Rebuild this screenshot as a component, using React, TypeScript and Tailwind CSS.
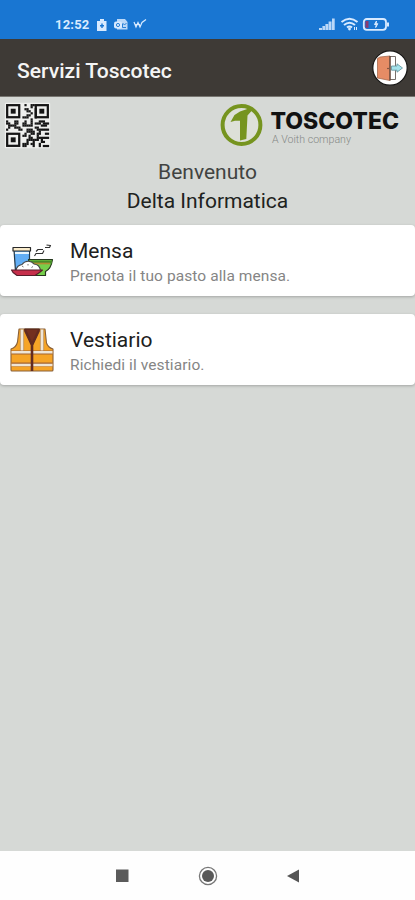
import type { ReactNode } from "react";

// data modules only, the three corner finders are drawn on top
const qrRows = [
  "000000000100110000000",
  "000000000000100000000",
  "000000000110001000000",
  "000000000011001000000",
  "000000000000101000000",
  "000000000011001000000",
  "000000001110001000000",
  "000000000000100000000",
  "100011000100100011100",
  "110011001100101110111",
  "011110001111100001110",
  "010011100000001100000",
  "100000110011100111111",
  "000000000011110010000",
  "000000000100110110011",
  "000000001101000100000",
  "000000000001100111111",
  "000000000011111101000",
  "000000000010010001100",
  "000000001110110010000",
  "000000001100010010111",
];

const finders = [
  [0, 0],
  [14, 0],
  [0, 14],
];

function QrCode() {
  return (
    <svg viewBox="-1 -1 23 23" className="size-[47px]">
      <rect x="-0.6" y="-0.6" width="22.2" height="22.2" rx="0.5" fill="#eeefed" />
      {qrRows.flatMap((row, y) =>
        [...row].map((cell, x) =>
          cell === "1" ? <rect key={`${x}-${y}`} x={x} y={y} width="1.08" height="1.08" fill="#151515" /> : null
        )
      )}
      {finders.map(([x, y]) => (
        <g key={`${x}-${y}`}>
          <rect x={x + 0.55} y={y + 0.55} width="5.9" height="5.9" fill="none" stroke="#151515" strokeWidth="1.1" />
          <rect x={x + 2.3} y={y + 2.3} width="2.4" height="2.4" fill="#151515" />
        </g>
      ))}
    </svg>
  );
}

function Logo() {
  return (
    <svg width="185" height="50" viewBox="0 0 185 50">
      <circle cx="23.5" cy="25" r="18.9" fill="#dde0d8" stroke="#76941f" strokeWidth="4" />
      <path d="M12.5 22 L16.5 15 L22 11.5 L33.5 7.5 L33.5 11 L29.5 15.5 L28.3 39 L22 40.5 V20.8 L17 20.8 Z" fill="#76941f" />
      <text x="52.5" y="29" textLength="128.5" fontSize="23" className="font-[Inter,sans-serif] font-extrabold" fill="#111">
        TOSCOTEC
      </text>
      <text x="54" y="43" textLength="79" lengthAdjust="spacingAndGlyphs" fontSize="10.5" className="font-[Roboto,sans-serif] font-light" fill="#858885">
        A Voith company
      </text>
    </svg>
  );
}

function ExitIcon() {
  return (
    <svg width="36" height="36" viewBox="0 0 36 36">
      <circle cx="18" cy="18" r="17.2" fill="#fff" stroke="#171615" strokeWidth="1.2" />
      <path d="M18 6.5 H23.5 V29.5 H18" fill="#fff" stroke="#77706c" strokeWidth="1" />
      <path d="M5.5 8.5 L8 7 L18 6 V30.5 L5.5 28 Z" fill="#e68c65" stroke="#a3694f" strokeWidth="0.8" />
      <path d="M18 6 V30.5" stroke="#5d453c" strokeWidth="1.3" />
      <circle cx="16" cy="18.5" r="0.8" fill="#614034" />
      <path d="M19.5 16 H25 V13.8 L30.5 18 L25 22.2 V20.2 H19.5 Z" fill="#a5e3ec" stroke="#5f909a" strokeWidth="0.8" />
    </svg>
  );
}

function MealIcon() {
  return (
    <svg width="44" height="44" viewBox="0 0 44 44" strokeLinejoin="round">
      <path d="M4 11 H19.5 V32 H5.5 Z" fill="#62aef5" stroke="#253848" strokeWidth="1.2" />
      <path d="M5 14 H19" stroke="#e9f7ff" strokeWidth="2" />
      <path d="M3 8.5 H20.5 V12 H3 Z" fill="#faeccb" stroke="#292929" strokeWidth="1.2" />
      <path d="M18.5 20.5 H42.5 C41.5 27 39 31 35.5 32.5 V36.5 H23 Z" fill="#76cf4b" stroke="#26371e" strokeWidth="1.2" />
      <path d="M20 21.5 H42 V24.5 H20 Z" fill="#478c29" />
      <path d="M23 24.5 H40" stroke="#b58d34" strokeWidth="1.7" />
      <path d="M6 31.5 C6.5 28 9 26 12 25.5 C15 21.5 21 21 24 25 C28 25.5 30 28 30.5 31.5 Z" fill="#fff" stroke="#444" strokeWidth="1.1" />
      <path d="M12 27 L13.5 28 M18 25 V26.5 M23 27.5 L21.5 28.5" stroke="#777" />
      <path d="M1.5 31 H32.5 L29.5 33.5 L25 36.5 H7 L3 33.5 Z" fill="#c62f4b" stroke="#571d2a" strokeWidth="1.1" />
      <path d="M24.5 17 L26 14.5 H32.5 L34 11.5 M26 12.5 L28 10.5 H33 M35 8.5 H39.5 L40.5 6.5 L36.5 6" fill="none" stroke="#303030" strokeWidth="1.1" />
    </svg>
  );
}

function VestIcon() {
  return (
    <svg width="44" height="46" viewBox="0 0 44 46" strokeLinejoin="round">
      <path d="M9 2 H35 L36.5 16 C37.5 19 39.5 21 43 22 V43 Q43 44 42 44 H2 Q1 44 1 43 V22 C4.5 21 6.5 19 7.5 15 Z" fill="#f6a426" stroke="#8a6038" strokeWidth="1.1" />
      <path d="M14.5 2 H29.5 L22 19 Z" fill="#74301f" stroke="#4c241b" />
      <path d="M12 2.5 V24 M32 2.5 V24" stroke="#b98b52" strokeWidth="4.2" />
      <path d="M12 2.5 V24 M32 2.5 V24" stroke="#f0e6d8" strokeWidth="2.6" />
      <path d="M1.5 25.5 H42.5 M1.5 37.5 H42.5" stroke="#a3622f" strokeWidth="3.8" />
      <path d="M1.5 25.3 H42.5 M1.5 38 H42.5" stroke="#eee5d6" strokeWidth="2.6" />
      <path d="M15 3 L22 18 L29 3 M22 17 V44" fill="none" stroke="#622b20" strokeWidth="2.6" />
    </svg>
  );
}

function StatusBar() {
  return (
    <div className="flex h-[39px] shrink-0 items-center justify-between bg-[#1976d2] pr-[25px] pl-[55px] pt-[10px] text-[#d8eaff]">
      <div className="flex items-center gap-2">
        <span className="w-[34px] text-[13px] font-bold leading-4 tracking-[0.2px]">12:52</span>
        <svg width="50" height="14" viewBox="0 0 50 14">
          <path d="M0 3 H3 V1 H7 V3 H9.5 V13 H0 Z" fill="currentColor" />
          <path d="M5 5.5 V10 M3 7.7 H7" stroke="#1976d2" strokeWidth="1.4" />
          <path d="M20 1 H28 L30.5 4 V11.5 H20 Z" fill="currentColor" opacity="0.85" />
          <rect x="17" y="3.5" width="8" height="7" rx="2" fill="currentColor" />
          <circle cx="21" cy="7" r="1.6" fill="none" stroke="#1976d2" strokeWidth="0.9" />
          <path d="M25.5 6 V9.5 H29 M25.5 5 L27.5 7 L29.5 5" fill="none" stroke="#1976d2" strokeWidth="0.9" />
          <path d="M37 4 L39 9 L41 4.5 L43 9 L45 4.5 L49 1.5 M37.5 6.5 H43" fill="none" stroke="currentColor" strokeWidth="1.2" />
        </svg>
      </div>
      <svg width="71" height="15" viewBox="0 0 71 15">
        <path d="M0 13 V11 H3 V13 Z M3.4 13 V9 H6 V13 Z M6.4 13 V7 H9.2 V13 Z M9.6 13 V4.5 H12.5 V13 Z M13 13 V1.5 H15.7 V13 Z" fill="currentColor" opacity="0.85" />
        <path d="M22.5 5 Q30.5 -1.5 38.5 5 M25 8 Q30.5 3.5 36 8 M28 10.5 Q30.5 8.5 33 10.5" fill="none" stroke="currentColor" strokeWidth="2" />
        <circle cx="30.5" cy="12" r="1.4" fill="currentColor" />
        <path d="M35.5 10 V13 M37.5 13 V10" stroke="currentColor" />
        <rect x="44.8" y="2" width="22.2" height="10.8" rx="3" fill="none" stroke="currentColor" strokeWidth="1.8" />
        <rect x="46.5" y="4" width="3" height="6.8" fill="#8c3a70" />
        <path d="M57.5 4 L55.5 7.5 H57.3 L56.7 10.5 L58.8 6.7 H57 Z" fill="currentColor" stroke="currentColor" />
        <path d="M69 5.5 V9.5" stroke="currentColor" strokeWidth="2" />
      </svg>
    </div>
  );
}

function ServiceCard({ icon, title, text }: { icon: ReactNode; title: string; text: string }) {
  return (
    <div className="flex h-[71px] items-center rounded-sm bg-white pl-2.5 shadow-[0_1px_3px_rgba(0,0,0,0.24)]">
      <div className="w-[60px] shrink-0">{icon}</div>
      <div className="pt-[6px]">
        <h2 className="text-[21px] leading-6 text-[#202020]">{title}</h2>
        <p className="mt-px text-[15.5px] leading-6 tracking-[0.09px] text-[#858585]">{text}</p>
      </div>
    </div>
  );
}

export default function App() {
  return (
    <div className="flex h-[900px] w-full flex-col overflow-hidden bg-[#d6d9d6] font-[Roboto,sans-serif]">
      <StatusBar />
      <header className="flex h-[58px] shrink-0 items-center justify-between border-b border-[#777570] bg-[#3e3a36] pr-[7px] pl-[17px]">
        <h1 className="pt-[6px] text-[21.1px] font-medium text-[#f5f5f5]">Servizi Toscotec</h1>
        <ExitIcon />
      </header>

      <main className="flex-1">
        <div className="flex h-[54px] items-start justify-between pr-3 pl-[3.5px]">
          <div className="pt-[5px]">
            <QrCode />
          </div>
          <div className="pt-[3px]">
            <Logo />
          </div>
        </div>
        <div className="h-[74px] pt-[7px] text-center text-[21px] leading-[28.5px]">
          <p className="text-[#414341]">Benvenuto</p>
          <p className="text-[#202220]">Delta Informatica</p>
        </div>
        <div className="flex flex-col gap-[18px]">
          <ServiceCard icon={<MealIcon />} title="Mensa" text="Prenota il tuo pasto alla mensa." />
          <ServiceCard icon={<VestIcon />} title="Vestiario" text="Richiedi il vestiario." />
        </div>
      </main>

      <nav className="flex h-[49px] shrink-0 items-center justify-center gap-[67px] bg-[#fefefe]">
        <svg width="18" height="20" viewBox="0 0 18 20">
          <rect x="3" y="3.5" width="12.5" height="12.5" fill="#5b5b5b" />
        </svg>
        <svg width="20" height="20" viewBox="0 0 20 20">
          <circle cx="10" cy="10" r="8.6" fill="none" stroke="#777" strokeWidth="1.3" />
          <circle cx="10" cy="10" r="6" fill="#595959" />
        </svg>
        <svg width="18" height="20" viewBox="0 0 18 20">
          <path d="M2 10 L14 3.5 V16.5 Z" fill="#555" />
        </svg>
      </nav>
    </div>
  );
}
